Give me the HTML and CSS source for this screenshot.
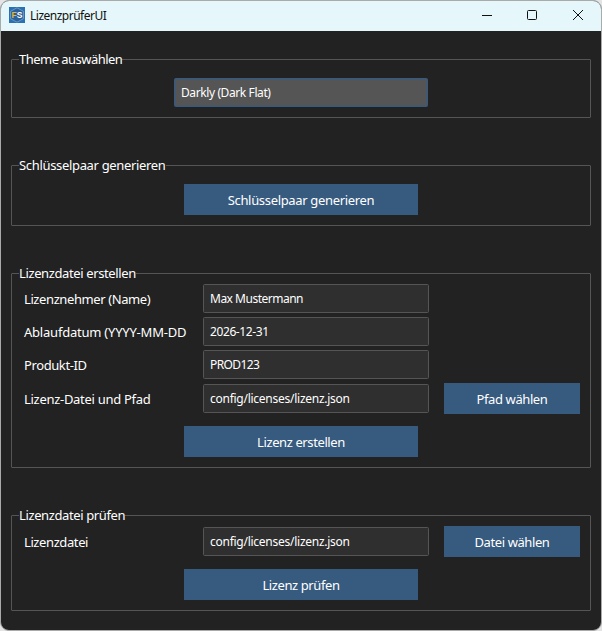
FILE: index.html
```html
<!DOCTYPE html>
<html lang="de">
<head>
<meta charset="utf-8">
<title>LizenzprüferUI</title>
<link rel="stylesheet" href="styles.css">
</head>
<body>
<div class="window">
  <header class="titlebar">
    <svg class="logo" width="16" height="16" viewBox="0 0 16 16">
      <rect width="16" height="16" fill="#2a70b2"/>
      <path d="M8 .8 14.4 4.3v7.4L8 15.2 1.6 11.7V4.3z" fill="#2d6198" stroke="#78a9d4" stroke-width=".8"/>
      <text class="logo-f" x="2.6" y="11">F</text>
      <text class="logo-s" x="7.8" y="11">S</text>
    </svg>
    <span class="title">LizenzprüferUI</span>
    <svg class="controls" width="104" height="14" viewBox="0 0 104 14" fill="none" stroke="#111">
      <path d="M2 7.5h10"/>
      <rect x="47.5" y="2.5" width="9" height="9" rx="1"/>
      <path d="M93 2l10 10M103 2L93 12"/>
    </svg>
  </header>
  <main class="content">
    <section class="frame frame-theme">
      <h2 class="legend l-theme">Theme auswählen</h2>
      <div class="combo">Darkly (Dark Flat)</div>
    </section>
    <section class="frame frame-keys">
      <h2 class="legend l-keys">Schlüsselpaar generieren</h2>
      <button class="button wide b-keys">Schlüsselpaar generieren</button>
    </section>
    <section class="frame frame-create">
      <h2 class="legend">Lizenzdatei erstellen</h2>
      <div class="form">
        <div class="row"><span class="label">Lizenznehmer (Name)</span><div class="entry name">Max Mustermann</div></div>
        <div class="row"><span class="label date">Ablaufdatum (YYYY-MM-DD</span><div class="entry">2026-12-31</div></div>
        <div class="row"><span class="label">Produkt-ID</span><div class="entry product">PROD123</div></div>
        <div class="row with-button"><span class="label path-label">Lizenz-Datei und Pfad</span><div class="entry path">config/licenses/lizenz.json</div><button class="button side">Pfad wählen</button></div>
      </div>
      <button class="button wide">Lizenz erstellen</button>
    </section>
    <section class="frame frame-check">
      <h2 class="legend">Lizenzdatei prüfen</h2>
      <div class="form">
        <div class="row with-button"><span class="label">Lizenzdatei</span><div class="entry path">config/licenses/lizenz.json</div><button class="button side">Datei wählen</button></div>
      </div>
      <button class="button wide">Lizenz prüfen</button>
    </section>
  </main>
</div>
</body>
</html>
```
FILE: styles.css
```css
* { box-sizing: border-box; }
body {
  margin: 0;
  background: #e4e4e4;
  font-family: "Noto Sans", "Open Sans", sans-serif;
  font-size: 13px;
  color: #fff;
}
.window {
  width: 602px;
  height: 631px;
  border: 1px solid #aaa;
  border-radius: 9px;
  background: #222;
  overflow: hidden;
}
.titlebar {
  height: 30px;
  display: flex;
  align-items: center;
  padding: 0 17px 0 8px;
  background: #e5f7fa;
  color: #111;
}
.logo { display: block; margin-top: -2px; }
.logo-f, .logo-s { font: bold 8.5px "Liberation Sans", sans-serif; }
.logo-f { fill: #e0b83e; }
.logo-s { fill: #fff; }
.title { margin-left: 5px; font-size: 12px; line-height: 28px; letter-spacing: -0.5px; }
.controls { margin-left: auto; margin-top: -2px; }
.content { padding: 28px 10px 0; }
.frame {
  position: relative;
  border: 1px solid #555;
  border-radius: 1px;
  display: flex;
  flex-direction: column;
}
.frame-theme { height: 59px; padding-top: 18px; }
.frame-keys { height: 61px; margin-top: 47px; padding-top: 18px; }
.frame-create { height: 195px; margin-top: 47px; padding-top: 10px; }
.frame-check { height: 96px; margin-top: 47px; padding-top: 10px; }
.legend {
  position: absolute;
  left: 7px;
  top: -10px;
  margin: 0;
  background: #222;
  font-size: 13px;
  font-weight: 400;
  line-height: 18px;
  letter-spacing: -0.38px;
  white-space: nowrap;
}
.l-theme { letter-spacing: -0.53px; }
.l-keys { letter-spacing: -0.33px; }
.combo, .entry {
  height: 29px;
  border: 1px solid #555;
  border-radius: 1.5px;
  background: #2f2f2f;
  padding-left: 6px;
  font-size: 12px;
  line-height: 27px;
  letter-spacing: -0.4px;
  white-space: nowrap;
}
.combo {
  width: 254px;
  margin-left: 162px;
  border-color: #375a7f;
  box-shadow: inset 0 0 0 0.5px #375a7f;
  background: #555;
}
.form { display: flex; flex-direction: column; gap: 4px; padding-left: 12px; }
.row { display: flex; align-items: center; height: 29px; }
.with-button { height: 31px; }
.label { width: 179px; line-height: 18px; letter-spacing: -0.4px; white-space: nowrap; }
.date { letter-spacing: -0.22px; }
.path-label { letter-spacing: -0.29px; }
.entry { width: 226px; }
.name { letter-spacing: -0.5px; }
.product { letter-spacing: -0.6px; }
.path { letter-spacing: -0.26px; }
.button {
  height: 31px;
  padding: 1px 0 0;
  border: 0;
  background: #375a7f;
  color: #fff;
  font: inherit;
  line-height: 31px;
  letter-spacing: -0.4px;
}
.wide { width: 234px; margin-left: 172px; }
.b-keys { letter-spacing: -0.33px; }
.form + .wide { margin-top: 12px; }
.side { width: 136px; margin-left: 15px; }
```
